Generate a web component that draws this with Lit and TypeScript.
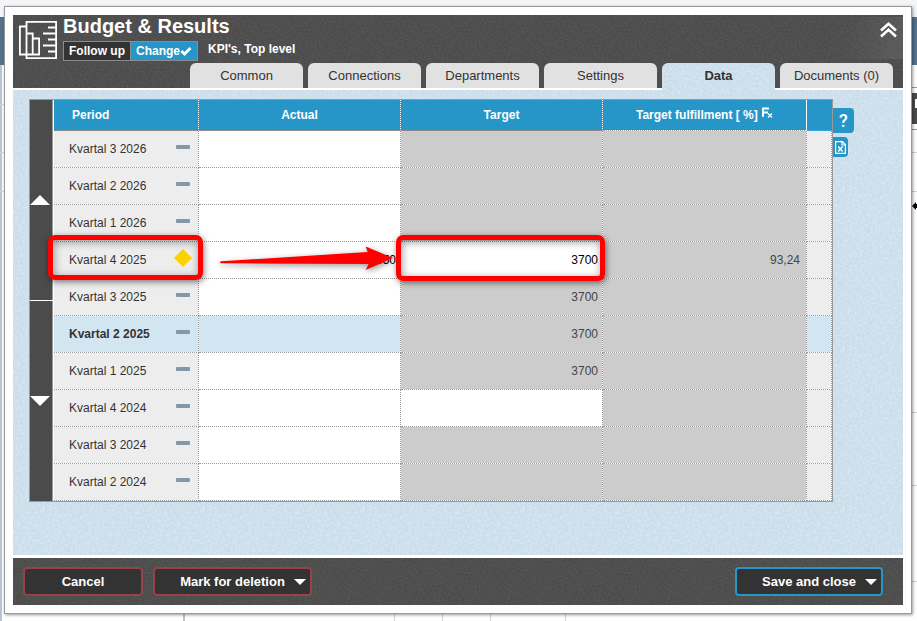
import { LitElement, html, css, svg, nothing } from "lit";
import { customElement, property, state } from "lit/decorators.js";
import { classMap } from "lit/directives/class-map.js";

type Row = {
  period: string;
  actual?: string;
  target?: string;
  fulfillment?: string;
  targetOpen?: boolean;
  current?: boolean;
  marked?: boolean;
};

const ROWS: Row[] = [
  { period: "Kvartal 3 2026" },
  { period: "Kvartal 2 2026" },
  { period: "Kvartal 1 2026" },
  { period: "Kvartal 4 2025", actual: "3450", target: "3700", fulfillment: "93,24", targetOpen: true, marked: true },
  { period: "Kvartal 3 2025", target: "3700" },
  { period: "Kvartal 2 2025", target: "3700", current: true },
  { period: "Kvartal 1 2025", target: "3700" },
  { period: "Kvartal 4 2024", targetOpen: true },
  { period: "Kvartal 3 2024" },
  { period: "Kvartal 2 2024" },
];

const TABS = ["Common", "Connections", "Departments", "Settings", "Data", "Documents (0)"];

const grain = css`url("data:image/svg+xml,%3Csvg xmlns='http://www.w3.org/2000/svg' width='160' height='160'%3E%3Cfilter id='n'%3E%3CfeTurbulence type='fractalNoise' baseFrequency='.5' numOctaves='2' stitchTiles='stitch'/%3E%3CfeColorMatrix values='0 0 0 0 1 0 0 0 0 1 0 0 0 0 1 .8 0 0 0 -.2'/%3E%3C/filter%3E%3Crect width='160' height='160' filter='url(%23n)' opacity='.16'/%3E%3C/svg%3E")`;
const lightGrain = css`url("data:image/svg+xml,%3Csvg xmlns='http://www.w3.org/2000/svg' width='160' height='160'%3E%3Cfilter id='n'%3E%3CfeTurbulence type='fractalNoise' baseFrequency='.4' numOctaves='2' stitchTiles='stitch'/%3E%3CfeColorMatrix values='0 0 0 0 1 0 0 0 0 1 0 0 0 0 1 2 0 0 0 -.6'/%3E%3C/filter%3E%3Crect width='160' height='160' filter='url(%23n)' opacity='.3'/%3E%3C/svg%3E")`;

@customElement("data-grid")
class DataGrid extends LitElement {
  @property({ attribute: false }) rows: Row[] = [];

  static styles = css`
    :host { display: flex; border: 1px solid #999; background: #fff; font: 12px/16px "Liberation Sans", Arial, sans-serif; color: #333; }
    .scroller { flex: none; width: 23px; margin-right: 1px; display: flex; flex-direction: column; gap: 1px; }
    .scroll { flex: 1; border: 0; border-right: 1px solid #999; padding: 0; background: #4b4b4b; display: flex; align-items: center; }
    table { flex: 1; width: 0; table-layout: fixed; border-collapse: separate; border-spacing: 0; }
    .c-period { width: 145px; }
    .c-full { width: 204px; }
    .c-end { width: 25px; }
    th, td { box-sizing: border-box; padding: 0; border: 0 dotted #999; border-width: 0 1px 1px 0; background-clip: padding-box; }
    thead th { height: 31px; background-color: #2696c8; color: #fff; border-right-color: #fff; font-weight: bold; text-align: center; }
    thead .first { text-align: left; padding-left: 18px; }
    thead th:not(.full) { background-clip: border-box; }
    thead .full { border-right-style: solid; }
    thead .last { border-right: 0; }
    .fx { vertical-align: 0; margin-left: 1px; }
    tbody th, tbody td { height: 37px; position: relative; }
    tbody th, .end { background-color: #ededed; font-weight: normal; text-align: left; }
    .cell { display: flex; align-items: center; justify-content: space-between; padding: 0 6px 0 15px; }
    .status { margin-bottom: 4px; }
    .locked { background-color: #ccc; text-align: right; padding-right: 4px; color: #444; }
    .ratio { padding-right: 6px; }
    .current th, .current .actual, .current .end { background-color: #d2e6f1; }
    .current th { font-weight: bold; }
    input { display: block; box-sizing: border-box; width: 100%; height: 36px; border: 0; padding: 0 4px; background: none; font: inherit; color: #000; text-align: right; outline: 0; }
    .frame { position: absolute; z-index: 2; inset: -7px -3px -3px -5px; border: 5px solid #f00; border-radius: 7px; pointer-events: none;
      box-shadow: 1px 2px 6px rgba(0, 0, 0, .5), inset 1px 2px 8px rgba(0, 0, 0, .4); }
    th .frame { inset: -7px -5px -2px -6px; }
    .arrow { position: absolute; z-index: 1; left: 20px; top: 0; width: calc(100% - 26px); height: 36px; overflow: visible; pointer-events: none;
      filter: drop-shadow(1px 2px 3px rgba(0, 0, 0, .4)); }
  `;

  private frame = html`<span class="frame"></span>`;

  private row(r: Row) {
    return html`<tr class=${classMap({ current: !!r.current })}>
      <th scope="row">
        <div class="cell">
          ${r.period}
          <svg class="status" width="18" height="18" aria-hidden="true">
            ${r.marked ? svg`<path d="M9 0 18 9 9 18 0 9z" fill="#fcd200"/>` : svg`<rect x="2" y="7" width="14" height="4" rx="1" fill="#8297a8"/>`}
          </svg>
        </div>
        ${r.marked ? this.frame : nothing}
      </th>
      <td class="actual">
        <input aria-label="Actual, ${r.period}" .value=${r.actual ?? ""} />
        ${r.marked
          ? html`<svg class="arrow" viewBox="0 0 176 36" preserveAspectRatio="none" aria-hidden="true">
              <path d="M2 19.3 149.5 10 147.5 4.5 175 16 147.5 28 150.5 22 2 21.3Q0 20.3 2 19.3z" fill="#f00"/></svg>`
          : nothing}
      </td>
      ${r.targetOpen
        ? html`<td><input aria-label="Target, ${r.period}" .value=${r.target ?? ""} />${r.marked ? this.frame : nothing}</td>`
        : html`<td class="locked">${r.target}</td>`}
      <td class="locked ratio">${r.fulfillment}</td>
      <td class="end"></td>
    </tr>`;
  }

  render() {
    return html`
      <div class="scroller">
        <button class="scroll" aria-label="Later periods"><svg width="20" height="10"><path d="M10 0 20 10H0z" fill="#fff"/></svg></button>
        <button class="scroll" aria-label="Earlier periods"><svg width="20" height="10"><path d="M0 0H20L10 10z" fill="#fff"/></svg></button>
      </div>
      <table>
        <colgroup><col class="c-period" /><col /><col /><col class="c-full" /><col class="c-end" /></colgroup>
        <thead>
          <tr>
            <th class="first" scope="col">Period</th>
            <th scope="col">Actual</th>
            <th scope="col">Target</th>
            <th class="full" scope="col">Target fulfillment [ %]
              <svg class="fx" width="11" height="12" fill="none" stroke="#fff" aria-hidden="true">
                <path d="M1 10V1.5H7M1 5.5H6" stroke-width="1.8"/><path d="M6 6.5 10 10.5M10 6.5 6 10.5" stroke-width="1.2"/></svg></th>
            <th class="last"></th>
          </tr>
        </thead>
        <tbody>${this.rows.map((r) => this.row(r))}</tbody>
      </table>`;
  }
}

@customElement("app-root")
class AppRoot extends LitElement {
  @state() private tab = "Data";

  static styles = css`
    :host { display: flex; box-sizing: border-box; min-height: 100vh; padding: 6px 5px 7px 4px; position: relative;
      font: 13px/16px "Liberation Sans", Arial, sans-serif; background: #fff; }
    .page { position: absolute; inset: 0; overflow: hidden; background:
      linear-gradient(#f4f5f8, #f4f5f8) 0 0 / 100% 17px no-repeat,
      linear-gradient(#54728c, #54728c) 0 17px / 100% 48px no-repeat,
      linear-gradient(#999, #999) 100% 87px / 6px 1px no-repeat,
      linear-gradient(#4b4b4b, #4b4b4b) 100% 93px / 6px 31px no-repeat,
      linear-gradient(#999, #999) 100% 129px / 6px 1px no-repeat,
      linear-gradient(#d3d3d3, #d3d3d3) 100% 152px / 6px 1px no-repeat,
      linear-gradient(#d3d3d3, #d3d3d3) 100% 191px / 6px 1px no-repeat,
      linear-gradient(#d3d3d3, #d3d3d3) 100% 412px / 6px 1px no-repeat,
      linear-gradient(#d3d3d3, #d3d3d3) 100% 485px / 6px 1px no-repeat,
      linear-gradient(#d3d3d3, #d3d3d3) 100% 581px / 6px 1px no-repeat,
      linear-gradient(#d3d3d3, #d3d3d3) 0 104px / 4px 1px no-repeat,
      linear-gradient(#d3d3d3, #d3d3d3) 0 152px / 4px 1px no-repeat,
      linear-gradient(#d3d3d3, #d3d3d3) 0 191px / 4px 1px no-repeat,
      linear-gradient(#b9c5d2, #b9c5d2) 0 65px / 2px 100% no-repeat,
      linear-gradient(#b9c5d2, #b9c5d2) 183px 100% / 2px 8px no-repeat,
      linear-gradient(#d3d3d3, #d3d3d3) 394px 100% / 1px 8px no-repeat,
      linear-gradient(#d3d3d3, #d3d3d3) 442px 100% / 1px 8px no-repeat,
      linear-gradient(#d3d3d3, #d3d3d3) 490px 100% / 1px 8px no-repeat,
      linear-gradient(#d3d3d3, #d3d3d3) 565px 100% / 1px 8px no-repeat; }
    .mark { position: absolute; z-index: 1; right: 0; top: 200px; }
    .chip { position: absolute; right: 0; top: 99px; width: 2px; height: 9px; background: #fff; }
    .dialog { position: relative; flex: 1; min-width: 0; box-sizing: border-box; border: 1px solid #999; padding: 8px; background: #fff; box-shadow: 1px 1px 3px rgba(0, 0, 0, .4);
      display: flex; flex-direction: column; }
    header { background: linear-gradient(100deg, transparent 40%, rgba(255, 255, 255, .08)) 100% 2px / 100px 42px no-repeat, ${grain}, #494949; height: 73px;
      display: flex; flex-direction: column; justify-content: space-between; }
    .top { display: flex; align-items: flex-start; padding: 0 6px; height: 48px; }
    .logo { flex: none; margin: 6px 6px 0 0; }
    .titles { flex: 1; }
    h1 { margin: 0; font-size: 20px; line-height: 22px; color: #fff; }
    .sub { display: flex; align-items: center; gap: 10px; margin-top: 4px; color: #fff; font-size: 12px; font-weight: bold; }
    .switch { display: flex; border: 1px solid #8c8c8c; background: #8c8c8c; gap: 1px; }
    .switch button { height: 18px; padding: 0 5px; border: 0; background: #333; color: #fff; font: inherit; line-height: 18px; display: flex; align-items: center; }
    .switch .on { background: #2696c8; }
    .path { margin-bottom: 4px; }
    .fold { border: 0; background: none; padding: 0; margin-top: 7px; height: 16px; }
    .fold svg { display: block; }
    nav { display: flex; justify-content: flex-end; gap: 5px; padding-right: 10px; }
    .tab { width: 113px; height: 25px; border: 0; border-radius: 6px 6px 0 0; padding: 0; background: #e1e1e1; color: #333; font: inherit; }
    .tab.on { background: ${lightGrain}, #c8dcea; font-weight: bold; height: 27px; margin-bottom: -2px; padding-bottom: 2px; position: relative; }
    main { flex: 1; margin: 2px 0 3px; padding: 9px 49px 53px 16px; background: ${lightGrain}, #c8dcea; display: flex; align-items: flex-start; }
    data-grid { flex: 1; min-width: 0; }
    .tools { display: flex; flex-direction: column; gap: 4px; width: 21px; padding-top: 9px; align-items: flex-start; }
    .tools button { border: 0; padding: 0; background: #2696c8; color: #fff; border-radius: 0 4px 4px 0; }
    .tools .help { width: 21px; height: 25px; font: 500 18px/25px Roboto, "Liberation Sans", sans-serif; }
    .excel { width: 15px; height: 20px; display: flex; align-items: center; justify-content: center; }
    footer { background: ${grain}, #494949; padding: 9px 20px 9px 10px; display: flex; gap: 10px; }
    footer button { display: grid; grid-template-columns: 1fr auto 1fr; align-items: center; height: 29px; padding: 0 4px; border: 2px solid #964247; border-radius: 4px; background: #333; color: #fff; font: inherit; font-weight: bold; }
    .cancel { width: 120px; }
    .delete { width: 159px; }
    footer .save { width: 148px; margin-left: auto; border-color: #2696c8; }
    .label { grid-column: 2; }
    .caret { justify-self: end; }
  `;

  private caret = html`<svg class="caret" width="12" height="6" aria-hidden="true"><path d="M0 0H12L6 6z" fill="#fff"/></svg>`;

  render() {
    return html`
      <div class="page"><span class="chip"></span></div>
      <section class="dialog">
        <header>
          <div class="top">
            <svg class="logo" width="38" height="38" fill="none" stroke="#fff" stroke-width="1.8" aria-hidden="true">
              <path d="M7.5 .9H37.1V37.1H7.5z"/>
              <path d="M7 5.5H.9V33.5H20.1V17.5H13.7V33M13.7 17.5V12.5H7.5"/>
              <path d="M37 6.5H29M37 12.5H24M37 18.5H29M37 24.5H24M37 30.5H29"/>
            </svg>
            <div class="titles">
              <h1>Budget &amp; Results</h1>
              <div class="sub">
                <div class="switch">
                  <button>Follow up</button>
                  <button class="on">Change<svg width="12" height="10" aria-hidden="true"><path d="M1.5 5 4.5 8 10.5 2" fill="none" stroke="#fff" stroke-width="2.8"/></svg></button>
                </div>
                <span class="path">KPI's, Top level</span>
              </div>
            </div>
            <button class="fold" aria-label="Collapse">
              <svg width="17" height="16" fill="none" stroke="#fff" stroke-width="2.6"><path d="M1 8.5 8.5 1.8 16 8.5M1 14.5 8.5 7.8 16 14.5"/></svg>
            </button>
          </div>
          <nav>
            ${TABS.map((t) => html`<button class=${classMap({ tab: true, on: t === this.tab })} @click=${() => (this.tab = t)}>${t}</button>`)}
          </nav>
        </header>
        <main>
          <data-grid .rows=${ROWS}></data-grid>
          <div class="tools">
            <button class="help" aria-label="Help">?</button>
            <button class="excel" aria-label="Export to Excel">
              <svg width="11" height="13" fill="none" stroke="#fff" aria-hidden="true">
                <path d="M.6 .6H7.5L10.4 3.5V12.4H.6zM7 1V4H10" stroke-width="1.2"/><path d="M3.2 5.5 7.6 10.5M7.6 5.5 3.2 10.5" stroke-width="1.5"/></svg>
            </button>
          </div>
        </main>
        <footer>
          <button class="cancel"><span class="label">Cancel</span></button>
          <button class="delete"><span class="label">Mark for deletion</span>${this.caret}</button>
          <button class="save"><span class="label">Save and close</span>${this.caret}</button>
        </footer>
      </section>
      <svg class="mark" width="5" height="12" aria-hidden="true"><path d="M0 6 4 2V4H5V8H4V10z" fill="#000"/></svg>`;
  }
}
